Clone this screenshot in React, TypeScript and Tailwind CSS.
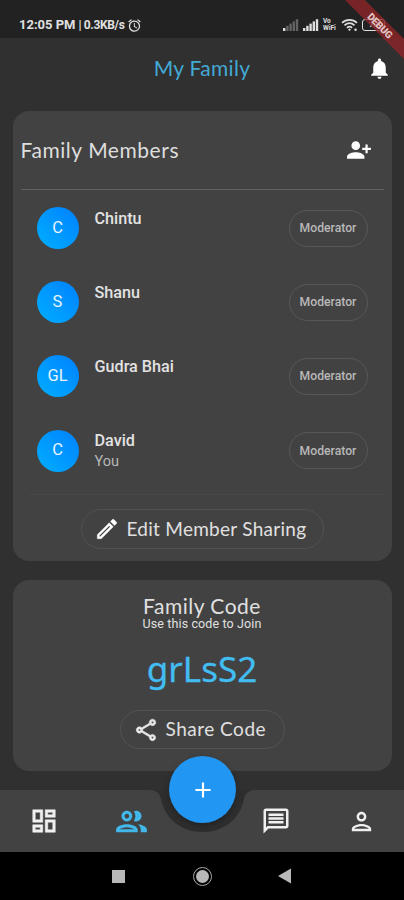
import React from 'react';
import {
  MdAdd,
  MdAlarm,
  MdNotifications,
  MdOutlineDashboard,
  MdOutlineEdit,
  MdOutlineMessage,
  MdOutlinePeople,
  MdOutlinePerson,
  MdOutlineShare,
  MdPersonAddAlt1,
} from 'react-icons/md';

interface Member {
  initials: string;
  name: string;
  note?: string;
  role: string;
}

const MEMBERS: Member[] = [
  { initials: 'C', name: 'Chintu', role: 'Moderator' },
  { initials: 'S', name: 'Shanu', role: 'Moderator' },
  { initials: 'GL', name: 'Gudra Bhai', role: 'Moderator' },
  { initials: 'C', name: 'David', note: 'You', role: 'Moderator' },
];

const Signal: React.FC<{ strength: number }> = ({ strength }) => (
  <svg width="16" height="12" viewBox="0 0 16 12" fill="#dedede">
    {[0, 1, 2, 3, 4].map((i) => (
      <rect key={i} x={i * 3.2} y={9 - i * 2.2} width="2.4" height={3 + i * 2.2} opacity={i < strength ? 1 : 0.35} />
    ))}
  </svg>
);

const StatusBar: React.FC = () => (
  <div className="relative flex h-[38px] shrink-0 items-start justify-between overflow-hidden bg-[#222222] pl-[19px] pr-[19px] pt-[17px] text-[#e0e0e0]">
    <div className="flex h-4 items-center">
      <span className="whitespace-nowrap text-[13px] font-bold leading-4">12:05 PM</span>
      <span className="ml-[3px] whitespace-nowrap text-[12px] font-bold leading-4 tracking-[-0.35px]">| 0.3KB/s</span>
      <MdAlarm size={15} className="ml-[2px]" />
    </div>
    <div className="flex h-4 items-center">
      <Signal strength={1} />
      <span className="ml-[4px] flex"><Signal strength={5} /></span>
      <span className="ml-[4px] flex w-[15px] flex-col text-[6.5px] font-bold leading-[7px]">
        <span>Vo</span>
        <span>WiFi</span>
      </span>
      <svg className="ml-[3px]" width="17" height="14" viewBox="0 0 18 15" fill="none" stroke="#dedede" strokeWidth="1.8">
        <path d="M1 5.200C5.500 1 12.500 1 17 5.200" />
        <path d="M3.600 8C7 5 11 5 14.400 8" />
        <path d="M6.200 10.500C8 9 10 9 11.800 10.500" />
        <path d="M9 11l1.500 1.500L9 14l-1.500-1.500z" fill="#dedede" stroke="none" />
        <circle cx="15.500" cy="12.500" r="1.300" fill="#dedede" stroke="none" />
      </svg>
      <span className="ml-[4px] flex h-[12px] w-[23px] items-center justify-center rounded-[3px] border-[1.5px] border-[#dedede] text-[8px] font-bold leading-none">
        70
      </span>
    </div>
  </div>
);

const DebugRibbon: React.FC = () => (
  <div className="pointer-events-none absolute right-0 top-0 h-[60px] w-[60px] overflow-hidden">
    <div className="absolute left-[-20px] top-[17px] flex h-[14px] w-[110px] rotate-45 items-center justify-center bg-[#8e2528]/80 pl-[4px] text-[10px] font-black tracking-[-0.2px] text-[#e3c4c4]">
      DEBUG
    </div>
  </div>
);

const MemberRow: React.FC<{ member: Member }> = ({ member }) => (
  <div className="flex h-[74.2px] items-center">
    <div className="flex h-[42px] w-[42px] items-center justify-center rounded-full bg-linear-to-tr from-[#00aeff] to-[#0080ff] text-[16.5px] text-[#e8f4ff]">
      {member.initials}
    </div>
    <div className="ml-4 h-[41px] flex-1 text-[#e2e2e2]">
      <p className="text-[16.2px] font-medium leading-[21px]">{member.name}</p>
      {member.note && <p className="text-[14.5px] leading-[21px] text-[#b8b8b8]">{member.note}</p>}
    </div>
    <span className="flex h-[37px] w-[79px] items-center justify-center rounded-full border border-[#585858] text-[12.2px] font-medium text-[#b8b8b8]">
      {member.role}
    </span>
  </div>
);

const FamilyMembers: React.FC = () => (
  <section className="mx-auto mt-[14px] flex h-[450px] w-[379px] shrink-0 flex-col rounded-[16px] bg-[#424242] px-[8px]">
    <div className="flex h-[77px] items-center justify-between pr-[12px]">
      <h2 className="font-['Lato'] text-[21px] tracking-[0.55px] text-[#dedede]">Family Members</h2>
      <MdPersonAddAlt1 size={26} className="text-white" />
    </div>
    <div className="mt-px h-px shrink-0 bg-[#626262]" />
    <div className="px-[16px] pt-px">
      {MEMBERS.map((member, i) => (
        <MemberRow key={i} member={member} />
      ))}
    </div>
    <div className="mt-[6px] ml-[8px] h-px shrink-0 bg-[#484848]" />
    <button className="mx-auto mt-[14px] flex h-[40px] w-[243px] shrink-0 items-center rounded-full border border-[#515151] pl-[12px] text-[#e0e0e0]">
      <MdOutlineEdit size={26} className="stroke-white text-white [stroke-width:0.3] [&>path[fill=none]]:stroke-none" />
      <span className="ml-[7px] whitespace-nowrap font-['Lato'] text-[19px] tracking-[0.27px]">Edit Member Sharing</span>
    </button>
  </section>
);

const FamilyCode: React.FC = () => (
  <section className="mx-auto mt-[19px] flex h-[191px] w-[379px] shrink-0 flex-col items-center rounded-[16px] bg-[#424242] pt-[14px] text-[#e0e0e0]">
    <h2 className="font-['Lato'] text-[21px] leading-[24px] tracking-[0.5px]">Family Code</h2>
    <p className="text-[12.5px] leading-[12px] tracking-[0.12px]">Use this code to Join</p>
    <p className="mt-[18px] font-['Noto_Sans'] text-[35px] leading-[42px] text-[#42bdf2] [-webkit-text-stroke:0.3px_#42bdf2]">
      grLsS2
    </p>
    <button className="mt-[20px] flex h-[39px] w-[165px] items-center rounded-full border border-[#535353] pl-[12px]">
      <MdOutlineShare size={26} className="stroke-[#e8e8e8] text-[#e8e8e8] [stroke-width:0.5] [&>path[fill=none]]:stroke-none" />
      <span className="ml-[7px] whitespace-nowrap font-['Lato'] text-[19px] tracking-[0.5px]">Share Code</span>
    </button>
  </section>
);

const BottomNav: React.FC = () => (
  <nav className="relative mt-auto flex h-[62px] shrink-0 items-center bg-[#424242] pl-[29px] text-[#f0f0f0]">
    {/* Notch cut out around the action button */}
    <svg className="absolute left-[148px] top-0" width="109" height="44" viewBox="0 0 109 44">
      <path d="M0 0C8 0 12 3 13 9C17 29 33 42 54.500 42C76 42 92 29 96 9C97 3 101 0 109 0Z" fill="#2e2e2e" />
    </svg>
    <MdOutlineDashboard size={30} className="stroke-[#f0f0f0] [stroke-width:0.4] [&>path[fill=none]]:stroke-none" />
    <MdOutlinePeople size={37} className="ml-[54px] text-[#42b8ea]" />
    <MdOutlineMessage size={30} className="ml-[111px]" />
    <MdOutlinePerson size={29} className="ml-[56px]" />
    <button className="absolute left-[169px] top-[-34px] flex h-[67px] w-[67px] items-center justify-center rounded-full bg-[#2196f3] text-white shadow-[0_3px_6px_rgba(0,0,0,0.25)]">
      <MdAdd size={26} />
    </button>
  </nav>
);

const SystemBar: React.FC = () => (
  <div className="flex h-[48px] shrink-0 items-center bg-black pl-[112px]">
    <span className="h-[13px] w-[13px] bg-[#b8b8b8]" />
    <span className="ml-[68px] flex h-[19px] w-[19px] items-center justify-center rounded-full border-[1.5px] border-[#a8a8a8]">
      <span className="h-[13px] w-[13px] rounded-full bg-[#b8b8b8]" />
    </span>
    <svg className="ml-[66px]" width="14" height="16" viewBox="0 0 14 16">
      <path d="M0 8L13 0.500V15.500Z" fill="#b8b8b8" />
    </svg>
  </div>
);

const App: React.FC = () => (
  <div className="relative flex h-[900px] w-[404px] flex-col overflow-hidden bg-[#303030] font-['Roboto',sans-serif]">
    <StatusBar />
    <header className="relative flex h-[59px] shrink-0 items-center justify-center pt-px">
      <h1 className="font-['Lato'] text-[21px] tracking-[0.3px] text-[#43a9d5]">My Family</h1>
      <MdNotifications size={25} className="absolute right-[12px] text-white" />
    </header>
    <FamilyMembers />
    <FamilyCode />
    <BottomNav />
    <SystemBar />
    <DebugRibbon />
  </div>
);

export default App;
